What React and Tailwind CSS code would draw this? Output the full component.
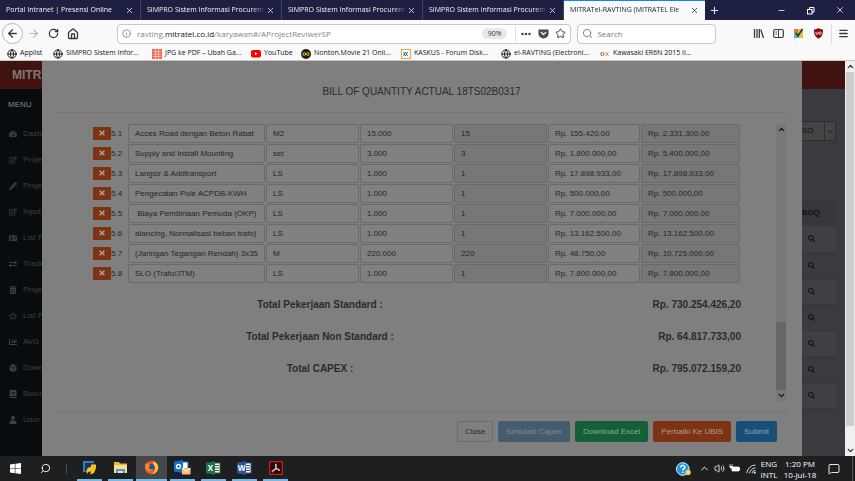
import React from "react";
import {
  FaTachometerAlt, FaRegEdit, FaPencilAlt, FaIdCard, FaExchangeAlt, FaTrashAlt,
  FaRegStar, FaChartBar, FaDiceD6, FaBook, FaUser, FaSearch, FaTimes,
} from "react-icons/fa";
import {
  ArrowLeft, ArrowRight, RotateCw, Home, Globe, Info, Star, Search, Menu, X, Plus, Minus,
  ChevronUp, ChevronDown, Volume2, MessageSquare, Ellipsis,
} from "lucide-react";

const ui = "font-['Open_Sans',sans-serif]";
const arial = "font-['Liberation_Sans',sans-serif]";

const tabs = [
  "Portal Intranet | Presensi Online",
  "SIMPRO Sistem Informasi Procurem",
  "SIMPRO Sistem Informasi Procurem",
  "SIMPRO Sistem Informasi Procurem",
  "MITRATel-RAVTING (MITRATEL Ele",
];

const menu = [
  [FaTachometerAlt, "Dashboard"],
  [FaRegEdit, "Project"],
  [FaPencilAlt, "Project"],
  [FaRegEdit, "Input"],
  [FaIdCard, "List Project"],
  [FaExchangeAlt, "Tracking"],
  [FaTrashAlt, "Project"],
  [FaRegStar, "List Project"],
  [FaChartBar, "AVG"],
  [FaDiceD6, "Download"],
  [FaBook, "Buku"],
  [FaUser, "User"],
];

const rows = [
  ["5.1", "Acces Road dengan Beton Rabat", "M2", "15.000", "15", "Rp. 155.420,00", "Rp. 2.331.300,00"],
  ["5.2", "Supply and Install Mounting", "set", "3.000", "3", "Rp. 1.800.000,00", "Rp. 5.400.000,00"],
  ["5.3", "Langsir & Addtransport", "LS", "1.000", "1", "Rp. 17.898.933,00", "Rp. 17.898.933,00"],
  ["5.4", "Pengecatan Pole ACPDB-KWH", "LS", "1.000", "1", "Rp. 500.000,00", "Rp. 500.000,00"],
  ["5.5", " Biaya Pembinaan Pemuda (OKP)", "LS", "1.000", "1", "Rp. 7.000.000,00", "Rp. 7.000.000,00"],
  ["5.6", "alancing, Normalisasi beban trafo)", "LS", "1.000", "1", "Rp. 13.162.500,00", "Rp. 13.162.500,00"],
  ["5.7", "(Jaringan Tegangan Rendah) 3x35", "M", "220.000", "220", "Rp. 48.750,00", "Rp. 10.725.000,00"],
  ["5.8", "SLO (Trafo/JTM)", "LS", "1.000", "1", "Rp. 7.800.000,00", "Rp. 7.800.000,00"],
];
const fields = ["Description", "Unit", "Quantity", "Actual", "Price", "Total"];

const totals = [
  ["Total Pekerjaan Standard :", "Rp. 730.254.426,20"],
  ["Total Pekerjaan Non Standard :", "Rp. 64.817.733,00"],
  ["Total CAPEX :", "Rp. 795.072.159,20"],
];

function TabStrip() {
  return (
    <div className="flex h-5 shrink-0 items-stretch bg-[#1e2041] text-[7px]">
      {tabs.map((t, i) => (
        <div
          key={i}
          className={
            i === 4
              ? "flex w-[141px] items-center border-t border-[#0a84ff] bg-[#f9f9fa] pl-1.5 pr-1.5 text-[#222]"
              : "flex w-[141px] items-center border-r border-[#42445f] pl-1.5 pr-1.5 text-[#f4f4f8]"
          }
        >
          <span className="min-w-0 flex-1 overflow-hidden whitespace-nowrap [mask-image:linear-gradient(to_right,black_88%,transparent)]">
            {t}
          </span>
          <button aria-label="Close tab"><X size={9} strokeWidth={2} /></button>
        </div>
      ))}
      <button aria-label="New tab" className="px-1 text-white"><Plus size={11} /></button>
      <div className="ml-auto flex items-center gap-5 pr-2.5 text-white">
        <button aria-label="Minimize"><Minus size={9} /></button>
        <button aria-label="Restore">
          <svg width="9" height="9" viewBox="0 0 9 9" fill="none" stroke="currentColor">
            <rect x="1.5" y="3.5" width="4.5" height="4.5" />
            <path d="M3.5 3.5V1.5H8V6H6" />
          </svg>
        </button>
        <button aria-label="Close"><X size={10} strokeWidth={1.8} /></button>
      </div>
    </div>
  );
}

function NavBar() {
  return (
    <div className="flex h-[27px] shrink-0 items-center bg-[#f9f9fa] pl-0.5 text-[#38383d]">
      <button aria-label="Back" className="flex size-[21px] items-center justify-center rounded-full border border-[#b5b5b8] bg-white">
        <ArrowLeft size={13} strokeWidth={2.4} />
      </button>
      <button aria-label="Forward" className="ml-1 text-[#b5b5b8]"><ArrowRight size={13} /></button>
      <button aria-label="Reload" className="ml-2"><RotateCw size={11} strokeWidth={2.8} /></button>
      <button aria-label="Home" className="ml-2"><Home size={12} strokeWidth={2.6} /></button>
      <div className="ml-[38px] flex h-5 flex-[460_1_0] items-center rounded-sm border border-[#c8c8cc] bg-white pr-1">
        <Info size={9} className="ml-1 shrink-0 text-[#77777c]" />
        <div className="ml-1.5 whitespace-nowrap text-[8px] text-[#85858a]">
          ravting.<span className="text-[#111]">mitratel.co.id</span>/karyawan#/AProjectReviwerSP
        </div>
        <span className="ml-auto rounded-full bg-[#e8e8ea] px-1.5 text-[7px] leading-[11px] text-[#333]">90%</span>
        <span className="mx-2 h-4 w-px bg-[#e0e0e3]" />
        <button aria-label="Page actions" className="-ml-1"><Ellipsis size={12} strokeWidth={3} /></button>
        <button aria-label="Save to Pocket" className="ml-1.5">
          <svg width="11" height="11" viewBox="0 0 16 16">
            <path fill="#4a4a4f" d="M2 2h12a1.4 1.4 0 0 1 1.400 1.500V8A7.400 7.400 0 0 1 .6 8V3.500A1.400 1.400 0 0 1 2 2z" />
            <path d="M4.600 6.300 8 9.500l3.400-3.200" fill="none" stroke="#fff" strokeWidth="1.800" strokeLinecap="round" strokeLinejoin="round" />
          </svg>
        </button>
        <button aria-label="Bookmark this page" className="ml-1.5"><Star size={11} /></button>
      </div>
      <label className="ml-1.5 flex h-5 flex-[136_1_0] items-center rounded-sm border border-[#c8c8cc] bg-white pl-1 text-[#77777c]">
        <Search size={11} className="shrink-0" />
        <input aria-label="Search" placeholder="Search" className="ml-1 w-full min-w-0 bg-transparent text-[8px] outline-none placeholder:text-[#77777c]" />
      </label>
      <div className="ml-[37px] flex items-center gap-[9px]">
        <button aria-label="Library">
          <svg width="11" height="11" viewBox="0 0 11 11" stroke="currentColor" strokeWidth="1.3">
            <path d="M1.500 1v9M4 1v9M6.300 1v9M7.800 1.500l2.700 8.500" fill="none" />
          </svg>
        </button>
        <button aria-label="Sidebars">
          <svg width="11" height="11" viewBox="0 0 11 11" fill="none" stroke="currentColor">
            <rect x=".7" y="1.500" width="9.600" height="8" rx="1.500" strokeWidth="1.200" />
            <path d="M5.500 2v7M2.500 4h1.500M2.500 6h1.500" />
          </svg>
        </button>
        <button aria-label="Extension">
          <svg width="11" height="11" viewBox="0 0 11 11">
            <rect x="1" y="1" width="9" height="9" fill="#f2b84b" />
            <path d="M1 1h4v4H1z" fill="#e2774c" /><path d="M1 5h5v5H1z" fill="#4fbfa8" />
            <path d="M3 5l2 3 4.500-7" fill="none" stroke="#233" strokeWidth="1.500" />
          </svg>
        </button>
        <button aria-label="uBlock">
          <svg width="11" height="11" viewBox="0 0 11 11">
            <path d="M5.500.3 10 1.800C10 6 9.500 8.500 5.500 10.700 1.500 8.500 1 6 1 1.800z" fill="#8e0611" />
            <path d="M3 3.800v1.700a1 1 0 0 0 2 0V3.800" fill="none" stroke="#fff" strokeWidth=".8" />
            <circle cx="7.200" cy="5.200" r="1.200" fill="none" stroke="#fff" strokeWidth=".8" />
          </svg>
        </button>
      </div>
      <span className="ml-[7px] h-5 w-px bg-[#dedee1]" />
      <button aria-label="Open menu" className="ml-1.5 mr-1.5"><Menu size={11} strokeWidth={2.8} /></button>
    </div>
  );
}

function Bookmark({ icon, children, className }) {
  return (
    <a href="#bookmark" className={"flex shrink-0 items-center whitespace-nowrap " + className}>
      <span className="mr-0.5 flex w-3 justify-center">{icon}</span>
      {children}
    </a>
  );
}

function BookmarksBar() {
  const globe = <Globe size={10} strokeWidth={2.2} />;
  return (
    <nav className="flex h-3.5 shrink-0 items-center border-b border-[#c6c6c9] bg-[#f9f9fa] pl-1.5 text-[7px] text-[#151515]">
      <Bookmark className="w-[46px]" icon={globe}>Applist</Bookmark>
      <Bookmark className="w-[99px]" icon={globe}>SIMPRO Sistem Infor...</Bookmark>
      <Bookmark
        className="w-[99px]"
        icon={
          <svg width="10" height="10" viewBox="0 0 10 10">
            <rect width="10" height="10" fill="#ef6a50" />
            <path d="M1 2.500h8M1 5h8M1 7.500h8M3.500 0v10M6.500 0v10" stroke="#f9d5cc" strokeWidth=".7" />
          </svg>
        }
      >
        JPG ke PDF – Ubah Ga...
      </Bookmark>
      <Bookmark
        className="w-[50px]"
        icon={
          <svg width="10" height="8" viewBox="0 0 10 8">
            <rect width="10" height="7.500" rx="2" fill="#f00" /><path d="M4 2.200v3l2.500-1.500z" fill="#fff" />
          </svg>
        }
      >
        YouTube
      </Bookmark>
      <Bookmark
        className="w-[100px]"
        icon={
          <svg width="10" height="10" viewBox="0 0 10 10">
            <circle cx="5" cy="5" r="5" fill="#221d10" />
            <circle cx="3.200" cy="5" r="1.400" fill="none" stroke="#e6b92c" />
            <circle cx="6.800" cy="5" r="1.400" fill="none" stroke="#e6b92c" />
          </svg>
        }
      >
        Nonton.Movie 21 Onli...
      </Bookmark>
      <Bookmark
        className="w-[100px]"
        icon={
          <svg width="10" height="10" viewBox="0 0 10 10">
            <rect x=".5" y=".5" width="9" height="9" fill="#fff" stroke="#eba53a" />
            <path d="M3 3v4M7 3 5 5l2 2M4.800 3 3.500 5l1.300 2" fill="none" stroke="#1a75c4" />
          </svg>
        }
      >
        KASKUS - Forum Disk...
      </Bookmark>
      <Bookmark className="w-[99px]" icon={globe}>el-RAVTING (Electroni...</Bookmark>
      <Bookmark
        className="w-[100px]"
        icon={
          <svg width="10" height="8" viewBox="0 0 10 8" fill="none">
            <circle cx="2.300" cy="4" r="1.600" stroke="#8c6a5c" />
            <path d="M5.500 2.200 8.500 6M8.500 2.200 5.500 6" stroke="#f0913a" />
          </svg>
        }
      >
        Kawasaki ER6N 2015 li...
      </Bookmark>
    </nav>
  );
}

function Backdrop() {
  return (
    <div className="flex h-full flex-col overflow-hidden bg-[#393b3e]">
      <header className="flex h-7 shrink-0 items-center bg-[#401210] pl-3 text-[12px] font-bold text-[#807774]">MITRATEL</header>
      <div className="flex min-h-0 flex-1">
        <aside className="w-24 shrink-0 bg-[#080c0f] text-[8px] text-[#3c4043]">
          <h2 className="flex h-8 items-center pl-2 text-[#85888a]">MENU</h2>
          <ul>
            {menu.map(([Icon, label], i) => (
              <li key={i}>
                <a href="#menu" className="flex h-[26px] items-center gap-1.5 whitespace-nowrap pl-[9px]">
                  <Icon size={8} className="shrink-0" />
                  {label}
                </a>
              </li>
            ))}
          </ul>
        </aside>
        <main className="flex flex-1 flex-col items-end pr-[9px] text-[8px] text-[#111314]">
          <div className="mt-8 flex h-5 w-16 border border-[#2c2e30] bg-[#424446]">
            <select aria-label="Type" className="min-w-0 flex-1 appearance-none pl-[29px] text-[8px]">
              <option>SO</option>
            </select>
            <span className="flex w-[11px] items-center justify-center border-l border-[#2c2e30]">
              <ChevronDown size={7} strokeWidth={3} />
            </span>
          </div>
          <table className="mt-[59px] w-full">
            <thead>
              <tr className="h-[26px] bg-[#35373a]"><th className="pr-4 text-right">BOQ</th></tr>
            </thead>
            <tbody>
              {[0, 1, 2, 3, 4, 5, 6].map((n) => (
                <tr key={n} className="h-[26px] border-b border-[#333538] odd:bg-[#3e4043]">
                  <td><FaSearch size={7} className="ml-auto mr-[21px]" /></td>
                </tr>
              ))}
            </tbody>
          </table>
        </main>
      </div>
    </div>
  );
}

function BoqTable() {
  return (
    <table className="w-full table-fixed border-collapse text-[8px]">
      <colgroup>
        <col className="w-[18px]" />
        <col className="w-[17px]" />
        <col className="w-[138px]" />
        <col className="w-[94px]" />
        <col className="w-[94px]" />
        <col className="w-[94px]" />
        <col className="w-[93px]" />
        <col />
      </colgroup>
      <tbody>
        {rows.map(([no, ...cells]) => (
          <tr key={no} className="h-5">
            <td className="p-0 pb-0.5">
              <button aria-label={"Delete " + no} className="flex h-[13px] w-[18px] items-center justify-center bg-[#7e3315] text-[#a9a09c]">
                <FaTimes size={8} />
              </button>
            </td>
            <td className="p-0 text-[#262626]">{no}</td>
            {cells.map((v, i) => (
              <td key={i} className="h-5 p-0 pb-px pr-px">
                <input
                  aria-label={fields[i] + " " + no}
                  defaultValue={v}
                  readOnly={i === 3 || i === 5}
                  className="block h-[19px] w-full rounded-xs border border-[#6a6a6a] bg-[#808080] px-1.5 text-[#262626] outline-none read-only:bg-[#777777]"
                />
              </td>
            ))}
          </tr>
        ))}
      </tbody>
    </table>
  );
}

function Modal() {
  const btn = "h-[21px] rounded-xs text-[8px] ";
  return (
    <section role="dialog" aria-label="Bill of quantity" className="absolute inset-y-0 left-[42px] right-[43px] flex flex-col bg-[#7f7f7f] pl-[15px] pr-4">
      <h1 className="flex h-[52px] shrink-0 items-center justify-center border-b border-[#757575] pt-2.5 text-[10px] text-[#2b2b2b]">
        BILL OF QUANTITY ACTUAL 18TS02B0317
      </h1>
      <div className="mt-[11px] flex min-h-0 flex-1 pl-9">
        <div className="min-w-0 flex-1">
          <BoqTable />
          <dl className="pt-1 text-[10px] font-bold text-[#2b2b2b]">
            {totals.map(([k, v]) => (
              <div key={k} className="flex h-8 items-center">
                <dt className="w-[454px] text-center">{k}</dt>
                <dd className="flex-1 text-right">{v}</dd>
              </div>
            ))}
          </dl>
        </div>
        <div className="ml-[35px] flex w-2.5 shrink-0 flex-col items-center bg-[#787878] text-[#151515]">
          <ChevronUp size={9} strokeWidth={3.5} className="my-px" />
          <div className="flex-1" />
          <div className="h-[68px] w-full bg-[#666666]" />
          <ChevronDown size={9} strokeWidth={3.5} className="my-px" />
        </div>
      </div>
      <footer className="mt-[11px] flex h-11 shrink-0 items-start justify-end gap-[5px] border-t border-[#757575] pr-[9px] pt-2">
        <button className={btn + "border border-[#6c6c6c] px-[7px] text-[#2b2b2b]"}>Close</button>
        <button disabled className={btn + "bg-[#445c6e] px-2 text-[#7d8b95]"}>Simulasi Capex</button>
        <button className={btn + "bg-[#145f38] px-2 text-[#8fa598]"}>Download Excel</button>
        <button className={btn + "bg-[#7e3315] px-2 text-[#b09a90]"}>Perbaiki Ke UBIS</button>
        <button className={btn + "bg-[#174f77] px-2 text-[#8ea3b2]"}>Submit</button>
      </footer>
    </section>
  );
}

function DocIcon({ color, letter }) {
  return (
    <svg width="15" height="14" viewBox="0 0 15 14">
      <rect x="7" y="2" width="7" height="10" fill="#fff" stroke={color} />
      <path d="M9 4.500h4M9 7h4M9 9.500h4" stroke={color} />
      <path d="M0 1.800 9 .3v13.400L0 12.200z" fill={color} />
      <text x="4.500" y="9.800" fontSize="8" fontWeight="700" textAnchor="middle" fill="#fff" fontFamily="Open Sans">{letter}</text>
    </svg>
  );
}

const apps = [
  ["SAP", (
    <svg width="15" height="15" viewBox="0 0 15 15">
      <path d="M1 1h11v4L5 12H1z" fill="#3a78b8" /><path d="M3 3h9v8H3z" fill="#16365e" />
      <path d="M5 14c-1-4 0-7 4-7V4.500h5V8l-2 5-4 1.500 1-3c-2 0-3 .5-4 2.500z" fill="#f7c325" />
    </svg>
  )],
  ["File Explorer", (
    <svg width="15" height="13" viewBox="0 0 15 13">
      <path d="M1 1h5l1 1.500h7V12H1z" fill="#e8b73c" /><path d="M1 4h13v8H1z" fill="#fbe08a" />
      <path d="M3 8h9v4h-2v-2H5v2H3z" fill="#3f9be0" />
    </svg>
  )],
  ["Firefox", (
    <svg width="15" height="15" viewBox="0 0 15 15">
      <circle cx="7.500" cy="7.500" r="6.800" fill="#f0522b" />
      <path d="M9 1c4 1.500 6 5 4.800 8.500-1 3-4 4.700-6.500 4.700C10 13 12 10 11 7 10.500 5 9 4 9 1z" fill="#ffcb30" />
      <circle cx="7.200" cy="7.300" r="3.300" fill="#2c4fa8" />
      <path d="M1.200 4c2-1 4 0 5 1.500L4.500 7.500c.5 2 3 2.500 5 1.500-1.500 3-6 3-7.500 0z" fill="#f98c1c" />
    </svg>
  )],
  ["Outlook", (
    <svg width="17" height="15" viewBox="0 0 17 15">
      <path d="M7 2h7v7H7z" fill="#fff" stroke="#0f6fc6" /><path d="M0 1.500 9 0v13L0 11.500z" fill="#0f6fc6" />
      <circle cx="4.500" cy="6.500" r="2" fill="none" stroke="#fff" strokeWidth="1.400" />
      <path d="M8 8h8.500v6.500H8z" fill="#f4c07a" /><path d="m8 8 4.300 3.500L16.500 8" fill="none" stroke="#fff" />
    </svg>
  )],
  ["Excel", <DocIcon color="#1e7145" letter="X" />],
  ["Word", <DocIcon color="#2b579a" letter="W" />],
  ["Acrobat Reader", (
    <svg width="14" height="14" viewBox="0 0 14 14">
      <rect x=".7" y=".7" width="12.600" height="12.600" fill="#2a0808" stroke="#d21f1f" strokeWidth="1.200" />
      <path d="M6.500 3c1.500 0 .5 3-.5 5s-2.500 3.500-3 2.500S6 8 8.500 8s3 1.500 1.500 1.500S6.500 6.500 6.500 3z" fill="none" stroke="#f3dede" />
    </svg>
  )],
];

function Taskbar() {
  return (
    <div className="flex h-[25px] shrink-0 items-stretch bg-[#1d1f21] text-white">
      <button aria-label="Start" className="w-[30px] pl-2.5">
        <svg width="11" height="11" viewBox="0 0 11 11" fill="#fff">
          <path d="M0 1.500 4.800.8v4.400H0zM5.400.7 11 0v5.200H5.400zM0 5.800h4.800v4.400L0 9.500zM5.400 5.800H11V11l-5.600-.8z" />
        </svg>
      </button>
      <button aria-label="Search" className="w-[30px] pl-2.5"><Search size={11} className="-scale-x-100" /></button>
      <span className="ml-1.5 h-2.5 w-px self-center bg-[#4a4c4e]" />
      <div className="ml-[7px] flex">
        {apps.map(([name, icon], i) => (
          <button key={name} aria-label={name} className={"flex w-[31px] flex-col items-center " + (i === 2 ? "bg-[#45484b]" : "")}>
            <span className="flex flex-1 items-center">{icon}</span>
            <span className={"h-0.5 bg-[#76b9ed] " + (i === 2 ? "w-full" : "w-[25px]")} />
          </button>
        ))}
      </div>
      <div className="ml-auto flex items-center text-[8px]">
        <svg width="15" height="14" viewBox="0 0 15 14">
          <circle cx="6.800" cy="7" r="6.300" fill="#2196d8" stroke="#e8f4fb" />
          <path d="M4.800 5.500c0-3 4.200-2.600 4 0C8.700 7 6.800 6.800 6.800 8.500M6.800 9.800v1.200" fill="none" stroke="#fff" strokeWidth="1.400" />
          <circle cx="12" cy="10.500" r="2.800" fill="#f6c944" />
          <path d="M12 9v2" stroke="#fff" />
        </svg>
        <ChevronUp size={11} className="ml-2" />
        <Volume2 size={11} strokeWidth={1.8} className="ml-1" />
        <svg width="11" height="9" viewBox="0 0 11 9" className="ml-1">
          <path d="M3 3h7v4H3zM10 4h1v2h-1zM1 0v2M3 0v2" fill="#fff" stroke="#fff" strokeWidth=".7" />
          <path d="M0 2h4v1.500L2 5z" fill="#fff" />
        </svg>
        <svg width="10" height="10" viewBox="0 0 10 10" className="ml-1.5" fill="none" stroke="#d8d8d8">
          <path d="M.8 9.200A9 9 0 0 1 9.500 1M3.500 9.200A6 6 0 0 1 9.500 4M6 9.200A3.300 3.300 0 0 1 9.500 6.500" />
          <circle cx="8.700" cy="8.700" r=".7" fill="#fff" />
        </svg>
        <div className="ml-1 w-[18px] text-center leading-[11px]">ENG<br />INTL</div>
        <div className="ml-0.5 w-10 text-center leading-[11px]">1:20 PM<br />10-Jul-18</div>
        <MessageSquare size={12} strokeWidth={1.8} className="ml-2" />
        <span className="ml-3 mr-0.5 h-full w-px bg-[#55585a]" />
      </div>
    </div>
  );
}

export default function App() {
  return (
    <div className={"flex h-screen flex-col overflow-hidden " + ui}>
      <TabStrip />
      <NavBar />
      <BookmarksBar />
      <div className={"flex min-h-0 flex-1 " + arial}>
        <div className="relative min-w-0 flex-1">
          <Backdrop />
          <Modal />
        </div>
        <div className="flex w-2.5 shrink-0 flex-col items-center bg-[#f0f0f0] text-[#333]">
          <ChevronUp size={9} strokeWidth={3.5} className="my-px shrink-0" />
          <div className="w-2 flex-1 bg-[#cdcdcd]" />
          <div className="h-[19px]" />
          <ChevronDown size={9} strokeWidth={3.5} className="my-px shrink-0" />
        </div>
      </div>
      <Taskbar />
    </div>
  );
}
